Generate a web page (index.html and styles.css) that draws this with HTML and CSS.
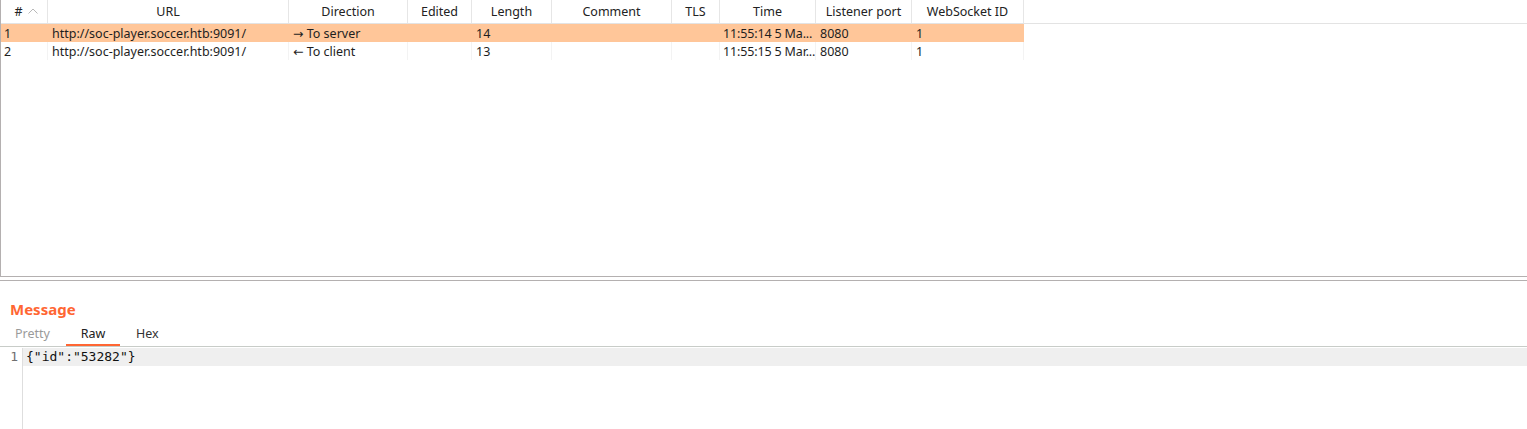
FILE: index.html
```html
<!DOCTYPE html>
<html>
<head>
<meta charset="utf-8">
<link rel="stylesheet" href="styles.css">
</head>
<body>
<div class="app">
  <div class="table-pane">
    <div class="row head">
      <div class="cell c-num"><span>#</span><svg class="sort" width="10" height="6" viewBox="0 0 10 6"><path d="M0.5 5.5 L5 1 L9.5 5.5" fill="none" stroke="#b8b8b8" stroke-width="1"/></svg></div>
      <div class="cell c-url">URL</div>
      <div class="cell c-dir">Direction</div>
      <div class="cell c-edit">Edited</div>
      <div class="cell c-len">Length</div>
      <div class="cell c-com">Comment</div>
      <div class="cell c-tls">TLS</div>
      <div class="cell c-time">Time</div>
      <div class="cell c-port">Listener port</div>
      <div class="cell c-ws">WebSocket ID</div>
      <div class="cell c-fill"></div>
    </div>
    <div class="row data selected">
      <div class="cell c-num">1</div>
      <div class="cell c-url">http://soc-player.soccer.htb:9091/</div>
      <div class="cell c-dir">→ To server</div>
      <div class="cell c-edit"></div>
      <div class="cell c-len">14</div>
      <div class="cell c-com"></div>
      <div class="cell c-tls"></div>
      <div class="cell c-time">11:55:14 5 Ma...</div>
      <div class="cell c-port">8080</div>
      <div class="cell c-ws">1</div>
    </div>
    <div class="row data">
      <div class="cell c-num">2</div>
      <div class="cell c-url">http://soc-player.soccer.htb:9091/</div>
      <div class="cell c-dir">← To client</div>
      <div class="cell c-edit"></div>
      <div class="cell c-len">13</div>
      <div class="cell c-com"></div>
      <div class="cell c-tls"></div>
      <div class="cell c-time">11:55:15 5 Mar...</div>
      <div class="cell c-port">8080</div>
      <div class="cell c-ws">1</div>
    </div>
  </div>
  <div class="message-pane">
    <h2 class="title">Message</h2>
    <div class="tabs">
      <div class="tab">Pretty</div>
      <div class="tab active">Raw</div>
      <div class="tab">Hex</div>
    </div>
    <div class="editor">
      <div class="gutter"><div class="ln">1</div></div>
      <div class="code">
        <div class="line current">{"id":"53282"}</div>
      </div>
    </div>
  </div>
</div>
</body>
</html>
```
FILE: styles.css
```css
html, body {
  margin: 0;
  padding: 0;
  background: #ffffff;
}
body {
  font-family: "Noto Sans", "DejaVu Sans", sans-serif;
  font-size: 12.5px;
  color: #1e1e1e;
  width: 1527px;
  height: 429px;
  overflow: hidden;
}
.app {
  display: flex;
  flex-direction: column;
  height: 429px;
}
.table-pane {
  height: 276px;
  border-left: 1px solid #b4b0b0;
  border-bottom: 1px solid #b4b0b0;
  box-sizing: content-box;
}
.row {
  display: grid;
  grid-template-columns: 47px 241px 119px 64px 80px 120px 48px 96px 96px 112px;
}
.row.head {
  grid-template-columns: 47px 241px 119px 64px 80px 120px 48px 96px 96px 112px 1fr;
  height: 23px;
  border-bottom: 1px solid #e3e3e3;
}
.head .cell {
  display: flex;
  align-items: center;
  justify-content: center;
  border-right: 1px solid #e6e6e6;
  line-height: 23px;
  color: #222;
}
.head .c-fill {
  border-right: none;
}
.head .c-num {
  gap: 5px;
  padding-left: 4px;
}
.sort {
  display: block;
  margin-top: -1px;
}
.row.data {
  height: 18px;
}
.data .cell {
  height: 18px;
  line-height: 20px;
  padding-left: 4px;
  white-space: nowrap;
  overflow: hidden;
  border-right: 1px solid #f3f3f3;
}
.data .c-num {
  padding-left: 3px;
}
.data .c-time {
  padding-left: 3px;
  letter-spacing: -0.15px;
}
.row.selected .cell {
  background: #ffc699;
  border-right-color: #ffc699;
}
.row.data:not(.selected) {
  width: 1024px;
}
.message-pane {
  margin-top: 3px;
  border-top: 1px solid #b4b0b0;
  flex: 1;
  display: flex;
  flex-direction: column;
}
.title {
  margin: 18px 0 0 10px;
  font-size: 15px;
  font-weight: bold;
  color: #ff6633;
  line-height: 20px;
}
.tabs {
  display: flex;
  margin-top: 4px;
  height: 23px;
}
.tab {
  line-height: 22px;
  padding: 0 13px 0 15px;
  font-size: 12.5px;
  color: #9a9a9a;
  box-sizing: border-box;
}
.tab.active {
  color: #222;
  border-bottom: 2px solid #ff6633;
  width: 54px;
  text-align: center;
  padding: 0;
  margin-left: 3px;
  margin-right: 2px;
}
.tab:last-child {
  color: #333;
  padding-left: 14px;
}
.editor {
  border-top: 1px solid #c8ccc8;
  flex: 1;
  display: flex;
  padding-top: 1px;
}
.gutter {
  width: 22px;
  border-right: 1px solid #dedede;
  font-family: "DejaVu Sans Mono", monospace;
  font-size: 13px;
  color: #707070;
  text-align: right;
}
.ln {
  line-height: 18px;
  padding-right: 4px;
}
.code {
  flex: 1;
  font-family: "DejaVu Sans Mono", monospace;
  font-size: 13px;
}
.line {
  line-height: 18px;
  padding-left: 3px;
  color: #111;
}
.line.current {
  background: #efefef;
}
```
